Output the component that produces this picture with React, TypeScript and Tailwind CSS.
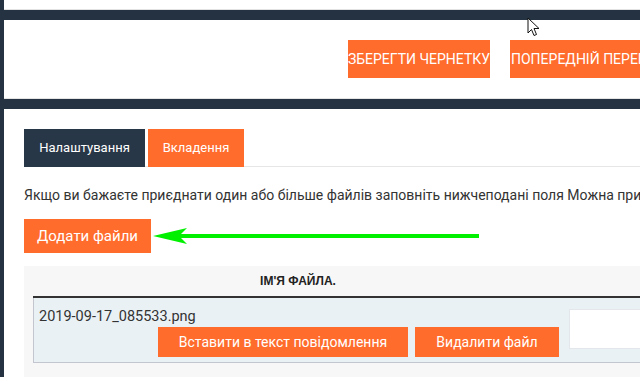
import React from 'react';

const font = { fontFamily: 'Roboto, "Noto Sans", sans-serif' };

function Cursor() {
  return (
    <svg className="absolute left-[527px] top-[17px]" width="14" height="21" viewBox="0 0 14 21">
      <path d="M1 1 L1 16 L4.5 12.5 L7 18.5 L9.5 17.5 L7 11.5 L12 11.5 Z" fill="#fff" stroke="#111" strokeWidth="1" strokeLinejoin="miter" />
    </svg>
  );
}

function Arrow() {
  return (
    <svg width="330" height="20" viewBox="0 0 330 20" className="ml-[2px] shrink-0">
      <rect x="26" y="8" width="300" height="4" fill="#00f000" />
      <path d="M0 10 L34 2 L26 10 L34 18 Z" fill="#00f000" />
    </svg>
  );
}

export default function App() {
  return (
    <div className="relative w-[640px] h-[377px] overflow-hidden bg-white flex" style={font}>
      {/* left dark strip */}
      <div className="w-[4px] bg-[#243241] shrink-0" />

      <div className="flex-1 flex flex-col min-w-0">
        <div className="h-[10px] bg-white border-b border-[#e2e2e2]" />
        <div className="h-[10px] bg-[#243241]" />

        {/* action bar */}
        <div className="h-[79px] bg-white border-b border-[#e4e4e4] flex items-start pt-[20px] pl-[344px] gap-[20px]">
          <button className="w-[142px] h-[38px] shrink-0 bg-[#ff6c2c] text-white text-[14px] whitespace-nowrap flex items-center justify-center overflow-hidden">
            ЗБЕРЕГТИ ЧЕРНЕТКУ
          </button>
          <button className="w-[190px] h-[38px] shrink-0 bg-[#ff6c2c] text-white text-[14px] whitespace-nowrap flex items-center pl-[1px]">
            ПОПЕРЕДНІЙ ПЕРЕГЛЯД
          </button>
        </div>

        <div className="h-[10px] bg-[#243241]" />

        {/* content */}
        <div className="flex-1 pt-[20px] pl-[20px] flex flex-col">
          <div className="flex items-end gap-[3px] border-b border-[#e6e6e6] h-[38px]">
            <div className="w-[121px] h-[38px] -mb-px bg-[#283748] text-white text-[13px] flex items-center justify-center">
              Налаштування
            </div>
            <div className="w-[96px] h-[38px] -mb-px bg-[#ff6c2c] text-white text-[13px] flex items-center justify-center">
              Вкладення
            </div>
          </div>

          <p className="mt-[18px] text-[14px] leading-[20px] text-[#333] whitespace-nowrap">
            Якщо ви бажаєте приєднати один або більше файлів заповніть нижчеподані поля Можна приєднати до 3 файлів
          </p>

          <div className="mt-[14px] flex items-center">
            <button className="w-[127px] h-[34px] shrink-0 bg-[#ff6c2c] text-white text-[15px] flex items-center justify-center">
              Додати файли
            </button>
            <Arrow />
          </div>

          {/* attachments table */}
          <div className="mt-[13px] flex-1 bg-[#f7f7f7] pl-[9px]">
            <div className="flex h-[32px] border-b-2 border-[#333]">
              <div
                className="w-[530px] shrink-0 flex items-center justify-center text-[12px] font-bold text-[#222] uppercase"
                style={{ fontFamily: '"Liberation Sans", Arial, sans-serif' }}
              >
                Ім'я файла.
              </div>
            </div>
            <div className="flex bg-[#eaf1f5] border-l border-b border-[#c3c6cf] h-[65px]">
              <div className="w-[529px] shrink-0 flex flex-col pt-[9px] pl-[5px] pr-[4px]">
                <div className="text-[14.5px] leading-[20px] text-[#333]">2019-09-17_085533.png</div>
                <div className="flex justify-end gap-[7px]">
                  <button className="w-[250px] h-[30px] shrink-0 bg-[#ff6c2c] text-white text-[14px] flex items-center justify-center">
                    Вставити в текст повідомлення
                  </button>
                  <button className="w-[144px] h-[30px] shrink-0 bg-[#ff6c2c] text-white text-[14px] flex items-center justify-center">
                    Видалити файл
                  </button>
                </div>
              </div>
              <div className="ml-[6px] mt-[11px] w-[100px] h-[40px] shrink-0 bg-white border border-[#e3e6ea]" />
            </div>
          </div>
        </div>
      </div>

      <Cursor />
    </div>
  );
}
